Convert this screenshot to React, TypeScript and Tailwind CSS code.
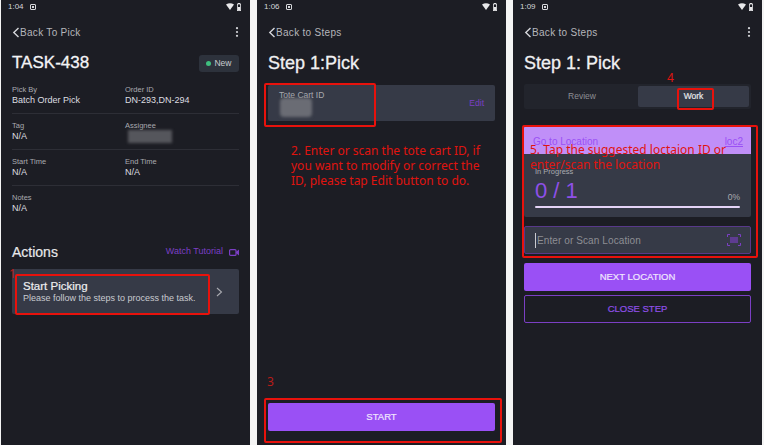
import React from "react";

const font = { fontFamily: '"Liberation Sans", Arial, sans-serif' };

function StatusBar({ time }: { time: string }) {
  return (
    <div className="flex h-[13px] items-center justify-between pl-[7px] pr-[9px] text-[8px] text-[#d5d6da]">
      <div className="flex items-center gap-[6px]">
        <span>{time}</span>
        <svg width="6" height="6" viewBox="0 0 6 6">
          <rect x="0.5" y="0.5" width="5" height="5" rx="0.5" fill="none" stroke="#d5d6da" />
          <rect x="2" y="2" width="2" height="2" fill="#d5d6da" />
        </svg>
      </div>
      <div className="flex items-center gap-[3px]">
        <svg width="8" height="7" viewBox="0 0 8 7"><path d="M0 1.5 Q4 -1 8 1.5 L4 7Z" fill="#e8e8ea" /></svg>
        <svg width="4" height="8" viewBox="0 0 4 8">
          <rect x="0.4" y="1" width="3.2" height="6.6" fill="none" stroke="#e8e8ea" strokeWidth="0.8" />
          <rect x="1" y="0" width="2" height="1" fill="#e8e8ea" />
          <rect x="0.8" y="4" width="2.4" height="3.4" fill="#e8e8ea" />
        </svg>
      </div>
    </div>
  );
}

function TopBar({ label, dots }: { label: string; dots?: boolean }) {
  return (
    <div className="mt-[12px] flex h-[14px] items-center justify-between">
      <div className="flex items-center text-[10px] tracking-[0.3px] text-[#b5b6bb]">
        <svg width="8" height="11" viewBox="0 0 8 11" fill="none" stroke="#d5d6da" strokeWidth="1.4">
          <path d="M6.5 1 L1.8 5.5 L6.5 10" />
        </svg>
        <span>{label}</span>
      </div>
      {dots && (
        <svg width="4" height="10" viewBox="0 0 4 10" fill="#d5d6da">
          <circle cx="2" cy="1.2" r="1.1" />
          <circle cx="2" cy="5" r="1.1" />
          <circle cx="2" cy="8.8" r="1.1" />
        </svg>
      )}
    </div>
  );
}

function Field({ label, value }: { label: string; value: string }) {
  return (
    <div className="flex-1">
      <div className="text-[7.5px] leading-[10px] text-[#a9aab0]">{label}</div>
      <div className="text-[9px] leading-[10px] text-[#dcdde0]">{value}</div>
    </div>
  );
}

function Row({ a, b, last }: { a: [string, string]; b?: [string, string]; last?: boolean }) {
  return (
    <div className={`flex h-[36px] pt-[7px] ${last ? "" : "border-b border-[#2d2e36]"}`}>
      <div className="w-[113px]"><Field label={a[0]} value={a[1]} /></div>
      {b && <div className="flex-1"><Field label={b[0]} value={b[1]} /></div>}
    </div>
  );
}

function Screen1() {
  return (
    <div className="h-[445px] w-[249px] bg-[#1c1d24]">
      <StatusBar time="1:04" />
      <div className="px-[11px]">
        <TopBar label="Back To Pick" dots />
        <div className="mt-[13px] flex h-[22px] items-center justify-between">
          <span className="text-[17px] text-[#f4f4f6] [-webkit-text-stroke:0.3px_#f4f4f6]">TASK-438</span>
          <div className="flex h-[17px] w-[40px] items-center justify-center gap-[3px] rounded-[3px] bg-[#2d323c] text-[8.5px] text-[#c8cbd0]">
            <span className="h-[5px] w-[5px] rounded-full bg-[#3fbf7f]" />
            New
          </div>
        </div>
        <div className="mt-[4px]">
          <Row a={["Pick By", "Batch Order Pick"]} b={["Order ID", "DN-293,DN-294"]} />
          <Row a={["Tag", "N/A"]} b={["Assignee", ""]} />
          <Row a={["Start Time", "N/A"]} b={["End Time", "N/A"]} />
          <Row a={["Notes", "N/A"]} last />
        </div>
        <div className="mt-[20px] flex h-[20px] items-center justify-between">
          <span className="text-[14px] text-[#e8e8ea] [-webkit-text-stroke:0.2px_#e8e8ea]">Actions</span>
          <div className="flex items-center gap-[6px] text-[9px] text-[#7b3fc4]">
            <span>Watch Tutorial</span>
            <svg width="10" height="7" viewBox="0 0 10 7" fill="none" stroke="#7b3fc4" strokeWidth="1.2">
              <rect x="0.6" y="0.6" width="6.4" height="5.8" rx="1" />
              <path d="M7.5 3.2 L9.6 1.5 V5.5 L7.5 3.8Z" fill="#7b3fc4" />
            </svg>
          </div>
        </div>
        <div className="mt-[7px] flex h-[45px] items-center justify-between rounded-[2px] bg-[#363a47] pl-[11px] pr-[16px]">
          <div>
            <div className="text-[11.5px] leading-[13px] text-[#eeeef0] [-webkit-text-stroke:0.2px_#eeeef0]">Start Picking</div>
            <div className="text-[9px] leading-[11px] text-[#c9cad0]">Please follow the steps to process the task.</div>
          </div>
          <svg width="7" height="10" viewBox="0 0 7 10" fill="none" stroke="#a9aab0" strokeWidth="1.1">
            <path d="M1 1 L5.5 5 L1 9" />
          </svg>
        </div>
      </div>
    </div>
  );
}

function Screen2() {
  return (
    <div className="flex h-[445px] w-[249px] flex-col bg-[#1c1d24]">
      <StatusBar time="1:06" />
      <div className="flex flex-1 flex-col px-[11px]">
        <TopBar label="Back to Steps" />
        <div className="mt-[13px] flex h-[22px] items-center">
          <span className="text-[18px] text-[#f0f0f2] [-webkit-text-stroke:0.3px_#f0f0f2]">Step 1:Pick</span>
        </div>
        <div className="mt-[11px] flex h-[36px] items-center justify-between rounded-[2px] bg-[#363a47] pl-[11px] pr-[11px]">
          <span className="-mt-[15px] text-[8.5px] text-[#a9aab0]">Tote Cart ID</span>
          <span className="text-[8.5px] text-[#7b3fc4]">Edit</span>
        </div>
        <div className="mt-auto mb-[14px] flex h-[28px] items-center justify-center rounded-[2px] bg-[#9a50f5] text-[9.5px] text-[#f0e6fe] [-webkit-text-stroke:0.2px_#f0e6fe]">
          START
        </div>
      </div>
    </div>
  );
}

function Screen3() {
  return (
    <div className="h-[445px] w-[249px] bg-[#1c1d24]">
      <StatusBar time="1:09" />
      <div className="px-[11px]">
        <TopBar label="Back to Steps" dots />
        <div className="mt-[13px] flex h-[22px] items-center">
          <span className="text-[18px] text-[#f0f0f2] [-webkit-text-stroke:0.3px_#f0f0f2]">Step 1: Pick</span>
        </div>
        <div className="mt-[10px] flex h-[25px] items-center rounded-[2px] bg-[#22242c] p-[2px] text-[8.5px]">
          <div className="flex h-full w-[112px] items-center justify-center text-[#8d8e94]">Review</div>
          <div className="flex h-full flex-1 items-center justify-center rounded-[2px] bg-[#363a47] text-[#e8e8ea] [-webkit-text-stroke:0.2px_#e8e8ea]">Work</div>
        </div>
        <div className="mt-[17px] overflow-hidden rounded-[2px] bg-[#363a47]">
          <div className="flex h-[28px] items-start justify-between bg-[#c08ff8] pl-[9px] pr-[8px] pt-[8px] text-[10px] text-[#9a50f5]">
            <span>Go to Location</span>
            <span className="underline">loc2</span>
          </div>
          <div className="h-[63px] px-[11px] pt-[13px]">
            <div className="text-[7.5px] leading-[10px] text-[#a9aab0]">In Progress</div>
            <div className="mt-[1px] flex h-[26px] items-end justify-between">
              <span className="text-[22px] leading-[26px] text-[#8f50e8]">0 / 1</span>
              <span className="pb-[2px] text-[8.5px] leading-[10px] text-[#a9aab0]">0%</span>
            </div>
            <div className="mt-[2px] h-[2px] rounded-full bg-[#e4d3f6]" />
          </div>
        </div>
        <div className="mt-[9px] flex h-[28px] items-center justify-between rounded-[2px] border border-[#58398a] bg-[#363a47] pl-[10px] pr-[9px]">
          <span className="border-l border-[#c9cad0] pl-[1px] text-[10px] tracking-[0.1px] text-[#8d8e94]">Enter or Scan Location</span>
          <svg width="14" height="12" viewBox="0 0 14 12" fill="none" stroke="#7b3fc4" strokeWidth="1">
            <path d="M0.5 3 V0.5 H3 M11 0.5 H13.5 V3 M0.5 9 V11.5 H3 M11 11.5 H13.5 V9" />
            <path d="M4 3 V9 M6 3 V9 M8 3 V9 M10 3 V9" strokeWidth="1.2" />
          </svg>
        </div>
        <div className="mt-[9px] flex h-[28px] items-center justify-center rounded-[2px] bg-[#9a50f5] text-[9.5px] text-[#f0e6fe] [-webkit-text-stroke:0.2px_#f0e6fe]">
          NEXT LOCATION
        </div>
        <div className="mt-[4px] flex h-[28px] items-center justify-center rounded-[2px] border border-[#7b3fc4] text-[9.5px] text-[#8f50e8] [-webkit-text-stroke:0.2px_#8f50e8]">
          CLOSE STEP
        </div>
      </div>
    </div>
  );
}

const noteFont = { fontFamily: '"Noto Sans", "DejaVu Sans", sans-serif' };

export default function App() {
  return (
    <div className="relative flex h-[445px] w-[764px] gap-[7px] overflow-hidden bg-[#f4f4f4] pl-[1px]" style={font}>
      <Screen1 />
      <Screen2 />
      <Screen3 />

      {/* blurred redactions */}
      <div className="absolute left-[128px] top-[130px] h-[13px] w-[44px] bg-[#55565c] blur-[1.5px]" />
      <div className="absolute left-[280px] top-[98px] h-[19px] w-[32px] rounded-[4px] bg-[#6a6c74] blur-[1.5px]" />

      {/* annotation boxes */}
      <div className="absolute left-[15px] top-[274px] h-[41px] w-[195px] rounded-[2px] border-2 border-[#e8120c]" />
      <div className="absolute left-[264px] top-[83px] h-[44px] w-[112px] rounded-[2px] border-2 border-[#e8120c]" />
      <div className="absolute left-[264px] top-[398px] h-[45px] w-[238px] rounded-[2px] border-2 border-[#e8120c]" />
      <div className="absolute left-[677px] top-[88px] h-[22px] w-[37px] rounded-[2px] border-2 border-[#e8120c]" />
      <div className="absolute left-[522px] top-[125px] h-[133px] w-[236px] rounded-[2px] border-2 border-[#e8120c]" />

      {/* annotation text */}
      <div className="absolute left-[9px] top-[266px] text-[12px] leading-[16px] text-[#b81c18]" style={noteFont}>1</div>
      <div className="absolute left-[291px] top-[143px] w-[195px] text-[12px] leading-[15px] text-[#e0140f]" style={noteFont}>
        2. Enter or scan the tote cart ID, if you want to modify or correct the ID, please tap Edit button to do.
      </div>
      <div className="absolute left-[267px] top-[374px] text-[12px] leading-[16px] text-[#b81c18]" style={noteFont}>3</div>
      <div className="absolute left-[667px] top-[70px] text-[12px] leading-[16px] text-[#e0140f]" style={noteFont}>4</div>
      <div className="absolute left-[530px] top-[142px] w-[215px] text-[12px] leading-[15px] text-[#e0140f]" style={noteFont}>
        5. Tap the suggested loctaion ID or enter/scan the location
      </div>
    </div>
  );
}
